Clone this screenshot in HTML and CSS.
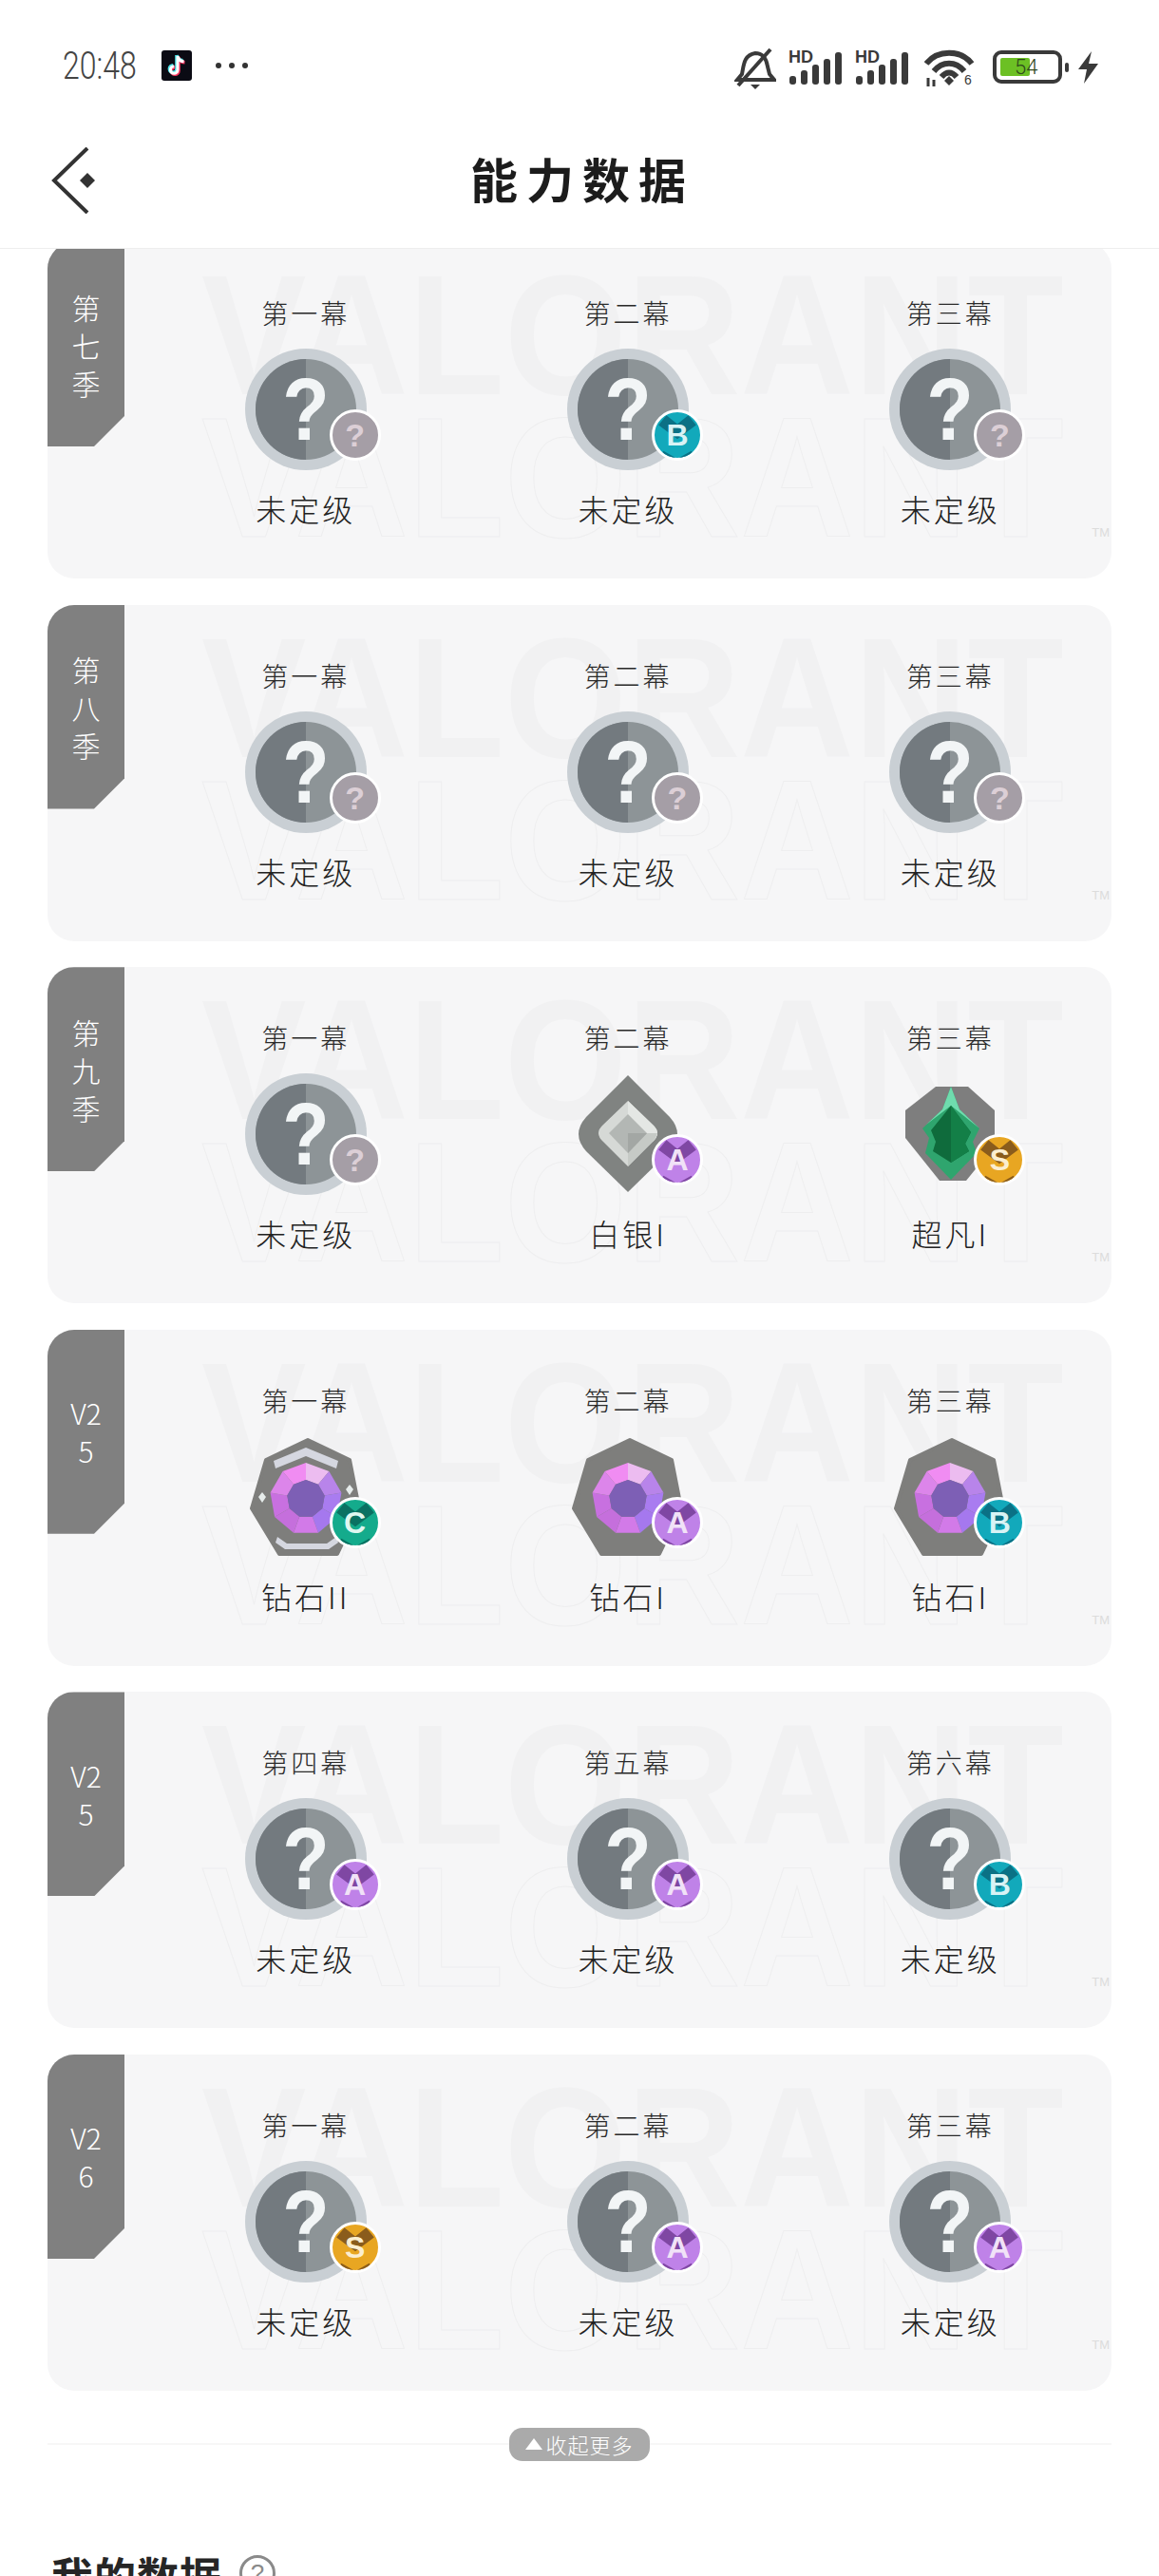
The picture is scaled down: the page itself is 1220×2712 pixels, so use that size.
FILE: index.html
```html
<!DOCTYPE html>
<html lang="zh">
<head>
    <meta charset="utf-8">
    <title>能力数据</title>
    <link rel="stylesheet" href="styles.css">
</head>
<body>
    <!-- shared shapes -->
    <svg class="defs" width="0" height="0" aria-hidden="true">
        <defs>
            <symbol id="rank-unranked" viewBox="0 0 128 128">
                <circle cx="64" cy="64" r="64" fill="#c9cfd4"/>
                <circle cx="64" cy="64" r="53" fill="#8d9497"/>
                <path d="M64 11a53 53 0 0 0 0 106z" fill="#737a7f"/>
            </symbol>
            <symbol id="rank-silver" viewBox="0 0 128 128">
                <path d="M64 2 108 46Q124 64 108 82L64 125 20 82Q4 64 20 46Z" fill="#808381"/>
                <path d="M64 29 90 54Q100 63 90 72L64 98 38 72Q28 63 38 54Z" fill="#d6d9d6"/>
                <path d="M64 29 90 54Q100 63 90 72L64 63Z" fill="#e4e7e4"/>
                <path d="M64 98 90 72Q94 68 95 63H64Z" fill="#c6cac6"/>
                <path d="M64 43 84 63 64 84 44 63Z" fill="#b3b7b4"/>
                <path d="M64 63H84L64 84Z" fill="#a3a7a4"/>
            </symbol>
            <symbol id="rank-ascendant" viewBox="0 0 128 128">
                <path d="M49 14H83L111 39V76L81 113H53L17 68V39Z" fill="#7e7e7e"/>
                <path d="M65 14 74 38 95 58 88 72 92 84 65 112 38 84 42 68 35 58 56 38Z" fill="#2fa56e"/>
                <path d="M65 14 74 38 95 58 65 34 39 54 56 38Z" fill="#6fdcae"/>
                <path d="M65 34 86 62 80 74 84 82 65 94 46 82 49 72 44 60Z" fill="#0f6b3c"/>
                <path d="M65 34 86 62 80 74 84 82 65 94Z" fill="#137f47"/>
            </symbol>
            <symbol id="rank-diamond" viewBox="0 0 128 128">
                <path d="M66 4 110 25 120 76 97 124H36L7 76 22 25Z" fill="#7e7e7c" stroke="#7e7e7c" stroke-width="4" stroke-linejoin="round"/>
                <polygon points="64,28 88.4,36.9 76.9,50.7 64,46" fill="#ecbcf0"/>
                <polygon points="88.4,36.9 101.4,59.4 83.7,62.5 76.9,50.7" fill="#b884ea"/>
                <polygon points="101.4,59.4 96.9,85 81.3,76 83.7,62.5" fill="#a97cf0"/>
                <polygon points="96.9,85 77,101.7 70.8,84.8 81.3,76" fill="#a578ee"/>
                <polygon points="77,101.7 51,101.7 57.2,84.8 70.8,84.8" fill="#d27ae8"/>
                <polygon points="51,101.7 31.1,85 46.7,76 57.2,84.8" fill="#c56fdc"/>
                <polygon points="31.1,85 26.6,59.4 44.3,62.5 46.7,76" fill="#c870e0"/>
                <polygon points="26.6,59.4 39.6,36.9 51.1,50.7 44.3,62.5" fill="#dc85ea"/>
                <polygon points="39.6,36.9 64,28 64,46 51.1,50.7" fill="#f08cf2"/>
                <polygon points="64,46 76.9,50.7 83.7,62.5 81.3,76 70.8,84.8 57.2,84.8 46.7,76 44.3,62.5 51.1,50.7" fill="#7d5fb5"/>
            </symbol>
            <symbol id="rank-diamond-stripes" viewBox="0 0 128 128">
                <path d="M30 26 64 12 98 26 96 34 64 21 32 34Z" fill="#d5d7e0"/>
                <path d="M34 106 44 113H86L96 106 98 112 88 119H42L32 112Z" fill="#d5d7e0"/>
                <path d="M14 64 18 59 22 64 18 70Z" fill="#e6eceb"/>
                <path d="M106 56 110 51 114 56 110 62Z" fill="#e6eceb"/>
            </symbol>
            <symbol id="badge-pattern" viewBox="0 0 46 46">
                <path d="M4 13 12 3 23 12 34 3 42 13 23 27Z"/>
                <path d="M9 39 23 47 37 39 42 46H4Z"/>
            </symbol>
        </defs>
    </svg>

    <header class="top">
        <div class="status">
            <div class="status__left">
                <span class="status__time">20:48</span>
                <svg class="status__app" viewBox="0 0 32 32">
                    <rect width="32" height="32" rx="3" fill="#0b0b14"/>
                    <path d="M17 6V20.5A3.8 3.8 0 1 1 13.2 16.7M17 6C17.5 9.5 20 11.5 23.5 11.8" fill="none" stroke="#f7345e" stroke-width="3.6" transform="translate(1 1)"/>
                    <path d="M17 6V20.5A3.8 3.8 0 1 1 13.2 16.7M17 6C17.5 9.5 20 11.5 23.5 11.8" fill="none" stroke="#4fe3e8" stroke-width="3.6" transform="translate(-1 -1)"/>
                    <path d="M17 6V20.5A3.8 3.8 0 1 1 13.2 16.7M17 6C17.5 9.5 20 11.5 23.5 11.8" fill="none" stroke="#fff" stroke-width="3"/>
                </svg>
                <span class="status__dots"><i></i><i></i><i></i></span>
            </div>
            <div class="status__right">
                <svg class="status__bell" viewBox="0 0 44 44" fill="none" stroke="#3a3a3a" stroke-width="4">
                    <path d="M3 34 8 28C10 18 10 8 22 6 32 6 34 14 35 20L37 28 42 34Z"/>
                    <path d="M4 40 38 2"/>
                    <path d="M17 39H27L22 44Z" fill="#3a3a3a" stroke="none"/>
                </svg>
                <svg class="status__signal" viewBox="0 0 57 37">
                    <text x="0" y="14" class="status__hd">HD</text>
                    <rect x="1" y="28" width="7" height="9" rx="3"/>
                    <rect x="13" y="22" width="7" height="15" rx="3"/>
                    <rect x="25" y="16" width="7" height="21" rx="3"/>
                    <rect x="37" y="10" width="7" height="27" rx="3"/>
                    <rect x="49" y="3" width="7" height="34" rx="3"/>
                </svg>
                <svg class="status__signal" viewBox="0 0 57 37">
                    <text x="0" y="14" class="status__hd">HD</text>
                    <rect x="1" y="28" width="7" height="9" rx="3"/>
                    <rect x="13" y="22" width="7" height="15" rx="3"/>
                    <rect x="25" y="16" width="7" height="21" rx="3"/>
                    <rect x="37" y="10" width="7" height="27" rx="3"/>
                    <rect x="49" y="3" width="7" height="34" rx="3"/>
                </svg>
                <svg class="status__wifi" viewBox="0 0 54 40" fill="none" stroke="#3a3a3a" stroke-width="6">
                    <path d="M2 15C14 0 38 0 50 15"/>
                    <path d="M10 23C19 12 33 12 42 23"/>
                    <path d="M18 29C23 23 29 23 34 29"/>
                    <path d="M26 28 31 33 26 38 21 33Z" fill="#3a3a3a" stroke="none"/>
                    <path d="M4 30V39M10 39V32" stroke-width="3"/>
                    <text x="42" y="37" class="status__wifi-num">6</text>
                </svg>
                <div class="status__battery">
                    <div class="battery">
                        <span class="battery__fill"></span>
                        <span class="battery__num">54</span>
                    </div>
                    <span class="battery__nub"></span>
                </div>
                <svg class="status__bolt" viewBox="0 0 23 34"><path d="M15 0 1 19H10L7 34 22 13H12Z" fill="#3a3a3a"/></svg>
            </div>
        </div>
        <div class="nav">
            <svg class="nav__back" viewBox="0 0 47 70" fill="none">
                <path d="M38 1 3 35 38 69" stroke="#333" stroke-width="4"/>
                <path d="M38 27 46 35 38 43 30 35Z" fill="#333"/>
            </svg>
            <h1 class="nav__title">能力数据</h1>
        </div>
    </header>

    <main class="seasons">
        <section class="season season--first">
            <div class="season__mark"><span class="mark-text">VALORANT</span><span class="mark-text mark-text--line">VALORANT</span><span class="mark-tm">TM</span></div>
            <div class="season__tag"><span>第七季</span></div>
            <div class="act">
                <div class="act__name">第一幕</div>
                <div class="rank">
                    <svg class="rank__icon"><use href="#rank-unranked"/></svg><span class="rank__q">?</span>
                    <span class="badge badge--none">?</span>
                </div>
                <div class="act__label">未定级</div>
            </div>
            <div class="act">
                <div class="act__name">第二幕</div>
                <div class="rank">
                    <svg class="rank__icon"><use href="#rank-unranked"/></svg><span class="rank__q">?</span>
                    <span class="badge badge--b"><svg class="badge__bg"><use href="#badge-pattern"/></svg><b>B</b></span>
                </div>
                <div class="act__label">未定级</div>
            </div>
            <div class="act">
                <div class="act__name">第三幕</div>
                <div class="rank">
                    <svg class="rank__icon"><use href="#rank-unranked"/></svg><span class="rank__q">?</span>
                    <span class="badge badge--none">?</span>
                </div>
                <div class="act__label">未定级</div>
            </div>
        </section>

        <section class="season">
            <div class="season__mark"><span class="mark-text">VALORANT</span><span class="mark-text mark-text--line">VALORANT</span><span class="mark-tm">TM</span></div>
            <div class="season__tag"><span>第八季</span></div>
            <div class="act">
                <div class="act__name">第一幕</div>
                <div class="rank">
                    <svg class="rank__icon"><use href="#rank-unranked"/></svg><span class="rank__q">?</span>
                    <span class="badge badge--none">?</span>
                </div>
                <div class="act__label">未定级</div>
            </div>
            <div class="act">
                <div class="act__name">第二幕</div>
                <div class="rank">
                    <svg class="rank__icon"><use href="#rank-unranked"/></svg><span class="rank__q">?</span>
                    <span class="badge badge--none">?</span>
                </div>
                <div class="act__label">未定级</div>
            </div>
            <div class="act">
                <div class="act__name">第三幕</div>
                <div class="rank">
                    <svg class="rank__icon"><use href="#rank-unranked"/></svg><span class="rank__q">?</span>
                    <span class="badge badge--none">?</span>
                </div>
                <div class="act__label">未定级</div>
            </div>
        </section>

        <section class="season">
            <div class="season__mark"><span class="mark-text">VALORANT</span><span class="mark-text mark-text--line">VALORANT</span><span class="mark-tm">TM</span></div>
            <div class="season__tag"><span>第九季</span></div>
            <div class="act">
                <div class="act__name">第一幕</div>
                <div class="rank">
                    <svg class="rank__icon"><use href="#rank-unranked"/></svg><span class="rank__q">?</span>
                    <span class="badge badge--none">?</span>
                </div>
                <div class="act__label">未定级</div>
            </div>
            <div class="act">
                <div class="act__name">第二幕</div>
                <div class="rank">
                    <svg class="rank__icon"><use href="#rank-silver"/></svg>
                    <span class="badge badge--a"><svg class="badge__bg"><use href="#badge-pattern"/></svg><b>A</b></span>
                </div>
                <div class="act__label">白银I</div>
            </div>
            <div class="act">
                <div class="act__name">第三幕</div>
                <div class="rank">
                    <svg class="rank__icon"><use href="#rank-ascendant"/></svg>
                    <span class="badge badge--s"><svg class="badge__bg"><use href="#badge-pattern"/></svg><b>S</b></span>
                </div>
                <div class="act__label">超凡I</div>
            </div>
        </section>

        <section class="season">
            <div class="season__mark"><span class="mark-text">VALORANT</span><span class="mark-text mark-text--line">VALORANT</span><span class="mark-tm">TM</span></div>
            <div class="season__tag"><span>V25</span></div>
            <div class="act">
                <div class="act__name">第一幕</div>
                <div class="rank">
                    <svg class="rank__icon"><use href="#rank-diamond"/></svg>
                    <svg class="rank__icon"><use href="#rank-diamond-stripes"/></svg>
                    <span class="badge badge--c"><svg class="badge__bg"><use href="#badge-pattern"/></svg><b>C</b></span>
                </div>
                <div class="act__label">钻石II</div>
            </div>
            <div class="act">
                <div class="act__name">第二幕</div>
                <div class="rank">
                    <svg class="rank__icon"><use href="#rank-diamond"/></svg>
                    <span class="badge badge--a"><svg class="badge__bg"><use href="#badge-pattern"/></svg><b>A</b></span>
                </div>
                <div class="act__label">钻石I</div>
            </div>
            <div class="act">
                <div class="act__name">第三幕</div>
                <div class="rank">
                    <svg class="rank__icon"><use href="#rank-diamond"/></svg>
                    <span class="badge badge--b"><svg class="badge__bg"><use href="#badge-pattern"/></svg><b>B</b></span>
                </div>
                <div class="act__label">钻石I</div>
            </div>
        </section>

        <section class="season">
            <div class="season__mark"><span class="mark-text">VALORANT</span><span class="mark-text mark-text--line">VALORANT</span><span class="mark-tm">TM</span></div>
            <div class="season__tag"><span>V25</span></div>
            <div class="act">
                <div class="act__name">第四幕</div>
                <div class="rank">
                    <svg class="rank__icon"><use href="#rank-unranked"/></svg><span class="rank__q">?</span>
                    <span class="badge badge--a"><svg class="badge__bg"><use href="#badge-pattern"/></svg><b>A</b></span>
                </div>
                <div class="act__label">未定级</div>
            </div>
            <div class="act">
                <div class="act__name">第五幕</div>
                <div class="rank">
                    <svg class="rank__icon"><use href="#rank-unranked"/></svg><span class="rank__q">?</span>
                    <span class="badge badge--a"><svg class="badge__bg"><use href="#badge-pattern"/></svg><b>A</b></span>
                </div>
                <div class="act__label">未定级</div>
            </div>
            <div class="act">
                <div class="act__name">第六幕</div>
                <div class="rank">
                    <svg class="rank__icon"><use href="#rank-unranked"/></svg><span class="rank__q">?</span>
                    <span class="badge badge--b"><svg class="badge__bg"><use href="#badge-pattern"/></svg><b>B</b></span>
                </div>
                <div class="act__label">未定级</div>
            </div>
        </section>

        <section class="season">
            <div class="season__mark"><span class="mark-text">VALORANT</span><span class="mark-text mark-text--line">VALORANT</span><span class="mark-tm">TM</span></div>
            <div class="season__tag"><span>V26</span></div>
            <div class="act">
                <div class="act__name">第一幕</div>
                <div class="rank">
                    <svg class="rank__icon"><use href="#rank-unranked"/></svg><span class="rank__q">?</span>
                    <span class="badge badge--s"><svg class="badge__bg"><use href="#badge-pattern"/></svg><b>S</b></span>
                </div>
                <div class="act__label">未定级</div>
            </div>
            <div class="act">
                <div class="act__name">第二幕</div>
                <div class="rank">
                    <svg class="rank__icon"><use href="#rank-unranked"/></svg><span class="rank__q">?</span>
                    <span class="badge badge--a"><svg class="badge__bg"><use href="#badge-pattern"/></svg><b>A</b></span>
                </div>
                <div class="act__label">未定级</div>
            </div>
            <div class="act">
                <div class="act__name">第三幕</div>
                <div class="rank">
                    <svg class="rank__icon"><use href="#rank-unranked"/></svg><span class="rank__q">?</span>
                    <span class="badge badge--a"><svg class="badge__bg"><use href="#badge-pattern"/></svg><b>A</b></span>
                </div>
                <div class="act__label">未定级</div>
            </div>
        </section>

        <div class="collapse">
            <span class="collapse__rule"></span>
            <button class="collapse__btn"><i class="collapse__arrow"></i>收起更多</button>
            <span class="collapse__rule"></span>
        </div>

        <div class="section-title">
            <h2 class="section-title__text">我的数据</h2>
            <span class="section-title__help">?</span>
        </div>
    </main>
</body>
</html>
```

FILE: styles.css
```css
* {
    margin: 0;
    padding: 0;
    box-sizing: border-box;
}

body {
    width: 1220px;
    height: 2712px;
    overflow: hidden;
    background: #fff;
    color: #222;
    font-family: "Noto Sans CJK SC", "Noto Sans", sans-serif;
}

.defs {
    position: absolute;
}

/* top bars */
.top {
    height: 262px;
    border-bottom: 1px solid #eee;
}

.status {
    height: 100px;
    padding: 50px 63px 0 66px;
    display: flex;
    justify-content: space-between;
    align-items: flex-start;
}

.status__left {
    display: flex;
    align-items: center;
    gap: 25px;
    height: 37px;
}

.status__time {
    width: 79px;
    font-family: Roboto, sans-serif;
    font-weight: 300;
    font-size: 41px;
    line-height: 44px;
    color: #444;
    white-space: nowrap;
    transform: scaleX(0.78);
    transform-origin: left;
}

.status__app {
    width: 32px;
    height: 32px;
}

.status__dots {
    display: flex;
    gap: 8px;
}

.status__dots i {
    width: 6px;
    height: 6px;
    border-radius: 50%;
    background: #333;
}

.status__right {
    display: flex;
    align-items: flex-start;
    gap: 13px;
}

.status__bell {
    width: 44px;
    height: 44px;
}

.status__signal {
    width: 57px;
    height: 37px;
    margin-top: 2px;
    fill: #3a3a3a;
}

.status__hd {
    font-family: "Liberation Sans", sans-serif;
    font-weight: 700;
    font-size: 18px;
}

.status__wifi {
    width: 54px;
    height: 40px;
    margin: 2px 5px 0 3px;
}

.status__wifi-num {
    font-family: "Liberation Sans", sans-serif;
    font-size: 14px;
    fill: #3a3a3a;
    stroke: none;
}

.status__battery {
    display: flex;
    align-items: center;
    gap: 3px;
    margin-top: 3px;
    height: 35px;
}

.battery {
    position: relative;
    width: 73px;
    height: 35px;
    padding: 4px;
    border: 4px solid #3a3a3a;
    border-radius: 9px;
}

.battery__fill {
    display: block;
    width: 31px;
    height: 100%;
    background: #6cc024;
    border-radius: 2px;
}

.battery__num {
    position: absolute;
    left: 19px;
    top: -3px;
    font-family: Roboto, sans-serif;
    font-weight: 300;
    font-size: 22px;
    line-height: 33px;
    color: #2f4a1c;
}

.battery__nub {
    width: 4px;
    height: 10px;
    background: #3a3a3a;
    border-radius: 2px;
}

.status__bolt {
    width: 23px;
    height: 34px;
    margin: 4px 0 0 -4px;
}

.nav {
    height: 161px;
    position: relative;
    display: flex;
    align-items: center;
    justify-content: center;
    padding: 12px 0 0 6px;
}

.nav__back {
    position: absolute;
    left: 54px;
    top: 55px;
    width: 47px;
    height: 70px;
}

.nav__title {
    font-size: 50px;
    font-weight: 700;
    letter-spacing: 9px;
    color: #1c1c1c;
    line-height: 60px;
}

/* season cards */
.seasons {
    height: 2450px;
    overflow: hidden;
    padding: 0 50px;
    display: flex;
    flex-direction: column;
    gap: 27.6px;
}

.season {
    flex: none;
    position: relative;
    height: 354px;
    padding: 58px 0 0 102px;
    display: grid;
    grid-template-columns: repeat(3, 1fr);
    background: #f6f6f7;
    border-radius: 28px;
    overflow: hidden;
}

.season--first {
    margin-top: -7px;
}

.season__mark {
    position: absolute;
    left: 162px;
    top: 8px;
    width: 960px;
    height: 340px;
    pointer-events: none;
}

.mark-text {
    position: absolute;
    left: 0;
    top: 0;
    font-family: "Liberation Sans", sans-serif;
    font-weight: 700;
    font-size: 180px;
    line-height: 180px;
    color: #f1f1f2;
    white-space: nowrap;
    transform: scaleX(0.92);
    transform-origin: left;
}

.mark-text--line {
    top: 150px;
    color: transparent;
    -webkit-text-stroke: 1px #eeeeef;
}

.mark-tm {
    position: absolute;
    right: 4px;
    top: 290px;
    font-family: "Liberation Sans", sans-serif;
    font-size: 13px;
    color: #dcdcdc;
}

.season__tag {
    position: absolute;
    left: 0;
    top: 0;
    width: 81px;
    height: 215px;
    display: flex;
    align-items: center;
    justify-content: center;
    background: #808080;
    clip-path: polygon(0 0, 100% 0, 100% 183px, 49px 100%, 0 100%);
    color: #fff;
    font-size: 30px;
    font-weight: 300;
    line-height: 40px;
    text-align: center;
}

.season__tag span {
    width: 44px;
    word-break: break-all;
}

.act {
    position: relative;
    display: flex;
    flex-direction: column;
    align-items: center;
}

.act__name {
    font-size: 28px;
    line-height: 32px;
    letter-spacing: 3px;
    font-weight: 300;
    color: #2a2a2a;
}

.act__label {
    margin-top: 23px;
    font-size: 32px;
    line-height: 34px;
    letter-spacing: 3px;
    font-weight: 300;
    color: #222;
}

.rank {
    position: relative;
    width: 128px;
    height: 128px;
    margin-top: 22px;
    display: flex;
    align-items: center;
    justify-content: center;
}

.rank__icon {
    position: absolute;
    left: 0;
    top: 0;
    width: 128px;
    height: 128px;
}

.rank__q {
    position: relative;
    font-family: "Liberation Sans", sans-serif;
    font-weight: 700;
    font-size: 92px;
    line-height: 92px;
    color: #f2f5f6;
    transform: scaleX(0.88);
}

.badge {
    position: absolute;
    left: 89px;
    top: 64px;
    width: 54px;
    height: 54px;
    display: flex;
    align-items: center;
    justify-content: center;
    border: 3px solid #fff;
    border-radius: 50%;
    overflow: hidden;
    font-family: "Liberation Sans", sans-serif;
    font-weight: 700;
    font-size: 32px;
    line-height: 1;
}

.badge b {
    position: relative;
}

.badge__bg {
    position: absolute;
    left: 0;
    top: 0;
    width: 100%;
    height: 100%;
}

.badge--none {
    background: #a59ea6;
    color: #dccfd6;
    font-size: 34px;
}

.badge--a {
    background: #bf82e8;
    color: #f1e2f7;
    fill: #7f47a3;
}

.badge--b {
    background: #12a9bb;
    color: #d8f3f5;
    fill: #0b7185;
}

.badge--c {
    background: #14ab8c;
    color: #dff7f0;
    fill: #0a7162;
}

.badge--s {
    background: #e8a622;
    color: #fbeed0;
    fill: #8a5c1c;
}

/* collapse button */
.collapse {
    flex: none;
    margin-top: 11px;
    display: flex;
    align-items: center;
}

.collapse__rule {
    flex: 1;
    height: 2px;
    background: #f7f7f7;
}

.collapse__btn {
    width: 148px;
    height: 35px;
    display: flex;
    align-items: center;
    justify-content: center;
    gap: 3px;
    border: none;
    border-radius: 14px;
    background: #aaa;
    color: #fff;
    font-family: inherit;
    font-size: 22px;
    font-weight: 300;
    letter-spacing: 1px;
}

.collapse__arrow {
    width: 0;
    height: 0;
    border-left: 9px solid transparent;
    border-right: 9px solid transparent;
    border-bottom: 12px solid #fff;
}

/* section below */
.section-title {
    flex: none;
    margin: 66px 0 0 4px;
    display: flex;
    align-items: flex-start;
    gap: 18px;
}

.section-title__text {
    font-size: 44px;
    font-weight: 700;
    line-height: 54px;
    letter-spacing: 1px;
    color: #262626;
}

.section-title__help {
    width: 38px;
    height: 38px;
    margin-top: 6px;
    display: flex;
    align-items: center;
    justify-content: center;
    border: 3px solid #8a8a8a;
    border-radius: 50%;
    font-family: "Liberation Sans", sans-serif;
    font-size: 26px;
    color: #8a8a8a;
}
```
